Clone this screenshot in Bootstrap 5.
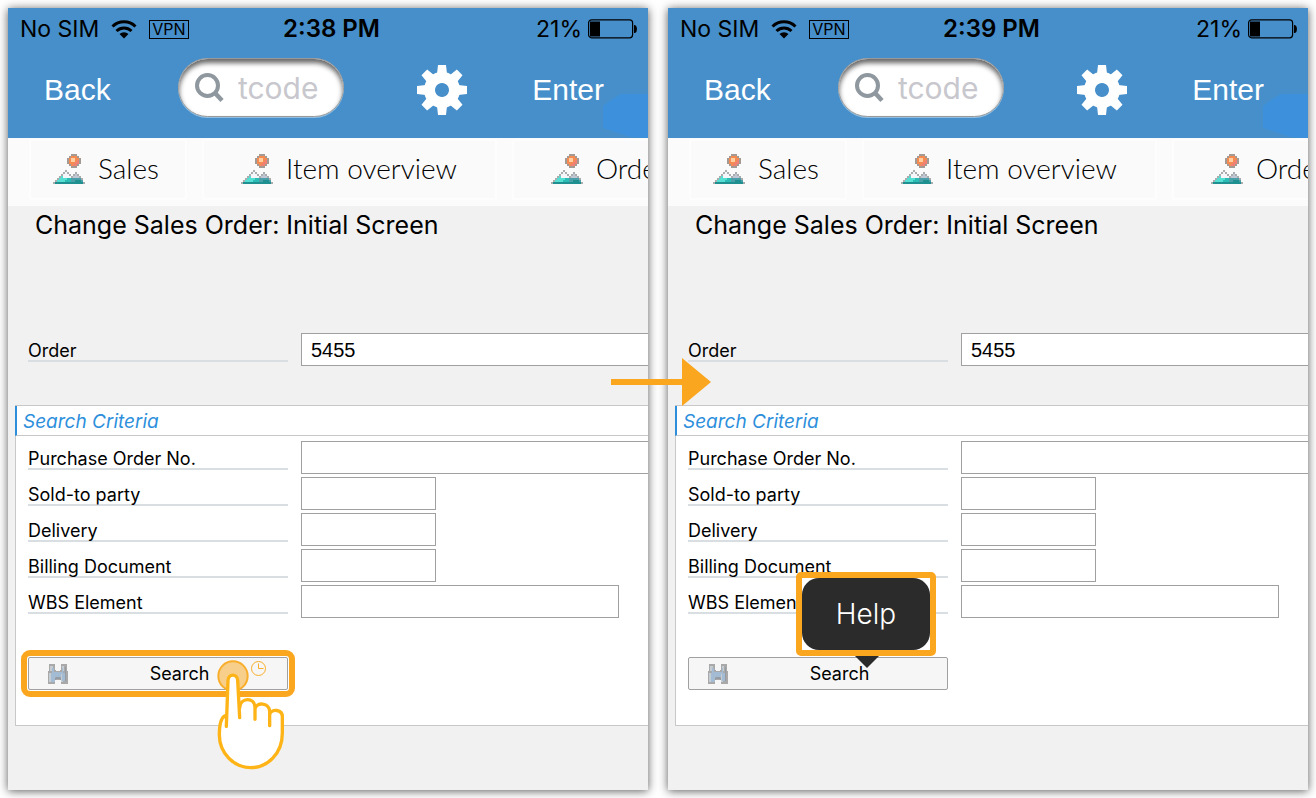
<!DOCTYPE html>
<html lang="en">
<head>
<meta charset="utf-8">
<meta name="viewport" content="width=device-width, initial-scale=1">
<title>Change Sales Order: Initial Screen</title>
<link href="https://cdn.jsdelivr.net/npm/bootstrap@5.3.0/dist/css/bootstrap.min.css" rel="stylesheet">
<style>
  body { background: #fff; font-family: Inter, sans-serif; color: #000; }
  .stage { min-height: 100vh; padding: 8px; gap: 20px; }
  .phone { flex: 1 1 0; min-width: 0; background: #f1f1f1; box-shadow: 0 1px 9px rgba(0,0,0,.65); }
  .phone-inner { overflow: hidden; }
  .top-area { background: #468fca; }
  .status { display: grid; grid-template-columns: 1fr auto 1fr; height: 42px; padding: 0 11px 0 12px; font-size: 23px; }
  .status-left { gap: 12px; }
  .status-right { gap: 6px; }
  .vpn { border: 1px solid #000; font-size: 16px; line-height: 17px; padding: 0 2px; }
  .clock-text { font-weight: 600; font-size: 24px; padding-left: 6px; }
  .toolbar { height: 88px; padding: 0 44px 8px 36px; }
  .tool-btn { border: 0; background: none; padding: 0; color: #fff; font: 30px "Liberation Sans", sans-serif; }
  .glow { right: 0; bottom: 0; width: 45px; height: 44px; }
  .pill { width: 166px; height: 59px; border-radius: 30px; margin: 0 0 5px 2px; background: #fff; border: 1px solid #999; box-shadow: inset 0 4px 5px rgba(0,0,0,.6), 0 1px 0 #8fbfe4; padding: 0 14px 0 16px; gap: 14px; }
  .pill input { border: 0; background: none; min-width: 0; width: 100%; padding: 0; outline: 0; font: 400 30px Inter, sans-serif; }
  .pill input::placeholder { color: #c7c7cd; opacity: 1; }
  .gear { margin-left: 8px; }
  .tabs { background: #fbfbfb; height: 68px; padding: 1px 0 0 21px; gap: 15px; overflow: hidden; }
  .tab-btn { flex: none; height: 61px; border: 2px solid #fdfdfd; border-radius: 3px; background: #fafafa; color: #000; padding: 0 26px 4px 22px; gap: 13px; font: 300 28px Lato, sans-serif; }
  .tab-btn svg { margin-top: 3px; }
  .tab-wide { padding: 0 38px 4px 37px; }
  .screen-title { font-size: 25px; line-height: 38px; margin: 0 0 89px 27px; font-weight: 400; }
  .field-row { gap: 13px; margin-bottom: 3px; }
  .field-row label { width: 260px; flex: none; font-size: 18px; line-height: 18px; padding-top: 4px; border-bottom: 2px solid #d9dee3; white-space: nowrap; }
  .box { height: 33px; border: 1px solid #a0a0a0; border-radius: 0; background: #fff; padding: 2px 9px 0; font: 20px "Liberation Sans", sans-serif; color: #000; min-width: 0; }
  .box-full { flex: 1 1 0; border-right: 0; }
  .box-short { width: 135px; }
  .box-mid { width: 318px; }
  .order-row { padding-left: 20px; margin-bottom: 39px; }
  .criteria { background: #fff; border: 1px solid #c8c8c8; border-right: 0; margin-left: 7px; }
  .criteria h2 { font-size: 19px; line-height: 29px; padding-top: 1px; height: 30px; font-style: italic; font-weight: 400; color: #2d8fdc; border-left: 2px solid #2d8fdc; border-bottom: 1px solid #c8c8c8; margin: 0 0 5px -1px; padding-left: 6px; }
  .criteria-body { padding: 0 0 35px 12px; }
  .search-wrap { width: 260px; margin-top: 39px; }
  .search-btn { height: 33px; border: 1px solid #a0a0a0; border-radius: 2px; background: #f6f6f6; font-size: 18px; color: #000; padding: 0 0 0 19px; }
  .search-text { flex: 1; padding-left: 4px; }
  .marked { outline: 6px solid #faa61f; outline-offset: 1px; }
  .hand { left: 187px; top: 1px; }
  .timer { left: 222px; top: 3px; }
  .tip { left: 108px; bottom: calc(100% + 1px); width: 140px; height: 84px; border: 6px solid #faa61f; border-radius: 5px; background: #fff; }
  .tip-label { background: #2b2b2b; color: #fff; border-radius: 17px; font-size: 28px; font-weight: 300; }
  .tip-tail { left: 167px; top: -1px; }
  .flow-arrow { left: calc(50% - 47px); top: 358px; }
</style>
</head>
<body>
<svg width="0" height="0" class="position-absolute" aria-hidden="true">
  <defs>
    <symbol id="wifi" viewBox="0 0 26 19">
      <path d="M1.500 6.500a16.500 16.500 0 0 1 23 0" fill="none" stroke="#000" stroke-width="3"/>
      <path d="M5.500 11a11 11 0 0 1 15 0" fill="none" stroke="#000" stroke-width="3"/>
      <path d="M8.500 14a6.500 6.500 0 0 1 9 0L13 18.500z"/>
    </symbol>
    <symbol id="battery" viewBox="0 0 49 20">
      <rect x=".6" y=".8" width="44" height="18" rx="3" fill="none" stroke="#000" stroke-width="1.200"/>
      <path d="M2 2.500h10v15H2zM46 6h1q2 1 2 4t-2 4h-1z"/>
    </symbol>
    <symbol id="lens" viewBox="0 0 29 30">
      <circle cx="12.500" cy="12.500" r="10.500" fill="none" stroke="#8f989f" stroke-width="4"/>
      <path d="M20 20l7 7.500" stroke="#8f989f" stroke-width="4.500"/>
    </symbol>
    <symbol id="gear" viewBox="-25 -25 50 50">
      <g fill="#fff">
        <path fill-rule="evenodd" d="M0-18a18 18 0 1 0 .01 0zM0-7a7 7 0 1 1-.01 0z"/>
        <path d="M-4-25h8l1 9H-5zM-4 25h8l1-9H-5zM-25-4v8l9 1V-5zM25-4v8l-9 1V-5z"/>
        <path transform="rotate(45)" d="M-4-25h8l1 9H-5zM-4 25h8l1-9H-5zM-25-4v8l9 1V-5zM25-4v8l-9 1V-5z"/>
      </g>
    </symbol>
    <symbol id="hill" viewBox="0 0 16 15">
      <g shape-rendering="crispEdges">
        <path fill="#a39a93" d="M9 0h3v1h1v1h1v3h-1v1h-1v1H9V6H8V5H7V2h1V1h1z"/>
        <path fill="#f58a52" d="M9 1h3v1h1v3h-1v1H9V5H8V2h1z"/>
        <path fill="#ffcfa2" d="M9 2h2v2H9z"/>
        <path fill="#ee8074" d="M11 4h1v1h-1zM12 3h1v2h-1zM10 5h2v1h-2z"/>
        <path fill="#a9adad" d="M6 8h1v1H6zM5 9h3v1H5zM11 9h1v1h-1zM4 10h5v1H4zM10 10h3v1h-3zM3 11h11v1H3zM2 12h13v1H2zM1 13h14v1H1zM0 14h16v1H0z"/>
        <path fill="#f4f6fa" d="M6 9h1v1H6zM5 10h3v1H5zM5 11h4v1H5z"/>
        <path fill="#c0c6d4" d="M11 10h1v1h-1zM10 11h3v1h-3z"/>
        <path fill="#55ded2" d="M4 11h1v1H4zM3 12h4v1H3zM2 13h4v1H2z"/>
        <path fill="#2bbcb6" d="M7 12h2v1H7zM6 13h3v1H6z"/>
        <path fill="#4a9fa8" d="M9 12h5v1H9zM9 13h6v1H9z"/>
        <path fill="#1f8f8f" d="M1 14h14v1H1zM11 13h3v1h-3z"/>
      </g>
    </symbol>
    <symbol id="bino" viewBox="0 0 20 20">
      <path fill="#a9a9a9" d="M1 0h6v6h1v1h4V6h1V0h6v7h1v13h-7v-4H7v4H0V7h1z"/>
      <path fill="#c5ccd2" d="M2 2h3v5H2zM14 2h2v5h-2zM1 9h2v9H1zM13 9h2v9h-2z"/>
      <path fill="#a3bcd4" d="M4 4h2v4h8V4h1v6H4zM3 9h4v9H3zM14 9h3v8h-3zM7 8h6v5H7z"/>
      <path fill="#959ba2" d="M7 14h1v2H7zM12 14h1v2h-1zM17 3h1v14h-1zM8 13h4v2H8z"/>
    </symbol>
  </defs>
</svg>

<main class="stage d-flex position-relative">
  <section class="phone d-flex" aria-label="Order screen, press and hold Search">
    <div class="phone-inner flex-grow-1">
      <header class="top-area position-relative">
        <div class="status align-items-center">
          <div class="status-left d-flex align-items-center"><span>No SIM</span><svg width="26" height="19"><use href="#wifi"/></svg><span class="vpn">VPN</span></div>
          <div class="clock-text">2:38 PM</div>
          <div class="status-right d-flex align-items-center justify-content-end"><span>21%</span><svg width="49" height="20"><use href="#battery"/></svg></div>
        </div>
        <svg class="glow position-absolute" viewBox="0 0 45 44"><path d="M45 0H18L8 6 0 12v22l12 4 16 5 17 1z" fill="#3d91dc"/></svg>
        <nav class="toolbar d-flex align-items-center justify-content-between position-relative">
          <button class="tool-btn" type="button">Back</button>
          <div class="pill d-flex align-items-center"><svg class="flex-shrink-0" width="29" height="30"><use href="#lens"/></svg><input type="text" placeholder="tcode" aria-label="tcode"></div>
          <button class="tool-btn gear d-flex" type="button" aria-label="Settings"><svg width="50" height="50"><use href="#gear"/></svg></button>
          <button class="tool-btn" type="button">Enter</button>
        </nav>
      </header>
      <div class="tabs d-flex">
        <button class="tab-btn d-flex align-items-center" type="button"><svg width="32" height="30"><use href="#hill"/></svg>Sales</button>
        <button class="tab-btn tab-wide d-flex align-items-center" type="button"><svg width="32" height="30"><use href="#hill"/></svg>Item overview</button>
        <button class="tab-btn tab-wide d-flex align-items-center" type="button"><svg width="32" height="30"><use href="#hill"/></svg>Orde</button>
      </div>
      <h1 class="screen-title">Change Sales Order: Initial Screen</h1>
      <div class="field-row order-row d-flex align-items-center"><label for="order-a">Order</label><input class="box box-full" id="order-a" type="text" value="5455"></div>
      <div class="criteria">
        <h2>Search Criteria</h2>
        <div class="criteria-body">
          <div class="field-row d-flex align-items-center"><label for="po-a">Purchase Order No.</label><input class="box box-full" id="po-a" type="text"></div>
          <div class="field-row d-flex align-items-center"><label for="sold-a">Sold-to party</label><input class="box box-short" id="sold-a" type="text"></div>
          <div class="field-row d-flex align-items-center"><label for="del-a">Delivery</label><input class="box box-short" id="del-a" type="text"></div>
          <div class="field-row d-flex align-items-center"><label for="bill-a">Billing Document</label><input class="box box-short" id="bill-a" type="text"></div>
          <div class="field-row d-flex align-items-center"><label for="wbs-a">WBS Element</label><input class="box box-mid" id="wbs-a" type="text"></div>
          <div class="search-wrap position-relative">
            <button class="search-btn marked d-flex align-items-center w-100" type="button"><svg width="20" height="20"><use href="#bino"/></svg><span class="search-text">Search</span></button>
            <svg class="timer position-absolute" width="18" height="18" viewBox="0 0 18 18" fill="none" stroke="#f9ae2b"><circle cx="8.500" cy="8.500" r="7"/><path d="M8.500 3.500v5h5"/></svg>
            <svg class="hand position-absolute" width="72" height="113" viewBox="645 55 216 339">
              <circle cx="699" cy="109" r="44" fill="#f9a61f" fill-opacity=".5" stroke="#f9ae2b" stroke-width="6"/>
              <g fill="#fff" stroke="#feb416" stroke-width="10" stroke-linecap="round" stroke-linejoin="round">
                <path d="M677 226L684 122C685 101 712 101 713 122L719 200C722 173 762 173 764 203C769 185 808 187 809 219C816 205 847 210 847 231V280C847 343 802 384 752 384C702 384 658 340 658 285C658 252 665 233 677 226z" stroke="none"/>
                <path fill="none" d="M679 260L684 122C685 101 712 101 713 122L719 234M719 205C721 172 764 172 765 203V239M765 208C769 186 808 188 809 215V258M809 224C816 205 847 210 847 231V280C847 343 802 384 752 384C702 384 658 340 658 285C658 252 665 233 675 228"/>
              </g>
            </svg>
          </div>
        </div>
      </div>
    </div>
  </section>

  <section class="phone d-flex" aria-label="Order screen with Help shown">
    <div class="phone-inner flex-grow-1">
      <header class="top-area position-relative">
        <div class="status align-items-center">
          <div class="status-left d-flex align-items-center"><span>No SIM</span><svg width="26" height="19"><use href="#wifi"/></svg><span class="vpn">VPN</span></div>
          <div class="clock-text">2:39 PM</div>
          <div class="status-right d-flex align-items-center justify-content-end"><span>21%</span><svg width="49" height="20"><use href="#battery"/></svg></div>
        </div>
        <svg class="glow position-absolute" viewBox="0 0 45 44"><path d="M45 0H18L8 6 0 12v22l12 4 16 5 17 1z" fill="#3d91dc"/></svg>
        <nav class="toolbar d-flex align-items-center justify-content-between position-relative">
          <button class="tool-btn" type="button">Back</button>
          <div class="pill d-flex align-items-center"><svg class="flex-shrink-0" width="29" height="30"><use href="#lens"/></svg><input type="text" placeholder="tcode" aria-label="tcode"></div>
          <button class="tool-btn gear d-flex" type="button" aria-label="Settings"><svg width="50" height="50"><use href="#gear"/></svg></button>
          <button class="tool-btn" type="button">Enter</button>
        </nav>
      </header>
      <div class="tabs d-flex">
        <button class="tab-btn d-flex align-items-center" type="button"><svg width="32" height="30"><use href="#hill"/></svg>Sales</button>
        <button class="tab-btn tab-wide d-flex align-items-center" type="button"><svg width="32" height="30"><use href="#hill"/></svg>Item overview</button>
        <button class="tab-btn tab-wide d-flex align-items-center" type="button"><svg width="32" height="30"><use href="#hill"/></svg>Orde</button>
      </div>
      <h1 class="screen-title">Change Sales Order: Initial Screen</h1>
      <div class="field-row order-row d-flex align-items-center"><label for="order-b">Order</label><input class="box box-full" id="order-b" type="text" value="5455"></div>
      <div class="criteria">
        <h2>Search Criteria</h2>
        <div class="criteria-body">
          <div class="field-row d-flex align-items-center"><label for="po-b">Purchase Order No.</label><input class="box box-full" id="po-b" type="text"></div>
          <div class="field-row d-flex align-items-center"><label for="sold-b">Sold-to party</label><input class="box box-short" id="sold-b" type="text"></div>
          <div class="field-row d-flex align-items-center"><label for="del-b">Delivery</label><input class="box box-short" id="del-b" type="text"></div>
          <div class="field-row d-flex align-items-center"><label for="bill-b">Billing Document</label><input class="box box-short" id="bill-b" type="text"></div>
          <div class="field-row d-flex align-items-center"><label for="wbs-b">WBS Element</label><input class="box box-mid" id="wbs-b" type="text"></div>
          <div class="search-wrap position-relative">
            <button class="search-btn d-flex align-items-center w-100" type="button"><svg width="20" height="20"><use href="#bino"/></svg><span class="search-text">Search</span></button>
            <div class="tip position-absolute d-flex" role="tooltip"><span class="tip-label flex-grow-1 d-flex align-items-center justify-content-center">Help</span></div>
            <svg class="tip-tail position-absolute" width="24" height="12" viewBox="0 0 24 12"><path d="M0 0h24L12 12z" fill="#2b2b2b"/></svg>
          </div>
        </div>
      </div>
    </div>
  </section>

  <svg class="flow-arrow position-absolute" width="100" height="48" viewBox="0 0 100 48" aria-hidden="true"><path d="M0 21h71V0l29 24-29 24V27H0z" fill="#faa61f"/></svg>
</main>
<script src="https://cdn.jsdelivr.net/npm/bootstrap@5.3.0/dist/js/bootstrap.bundle.min.js"></script>
</body>
</html>
